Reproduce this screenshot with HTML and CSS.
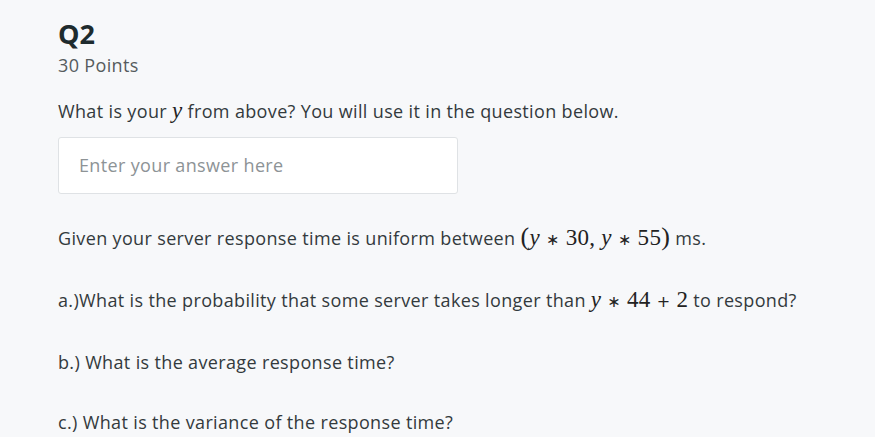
FILE: index.html
```html
<!DOCTYPE html>
<html>
<head>
<meta charset="utf-8">
<link rel="stylesheet" href="styles.css">
</head>
<body>
<main class="question">
  <h1 class="q-title">Q2</h1>
  <div class="q-points">30 Points</div>
  <p class="q-text first">What is your <span class="math"><i>y</i></span> from above? You will use it in the question below.</p>
  <div class="answer">Enter your answer here</div>
  <p class="q-text">Given your server response time is uniform between <span class="math"><span class="paren">(</span><i>y</i><span class="op">∗</span>30,<span class="sp"></span><i>y</i><span class="op">∗</span>55<span class="paren">)</span></span> ms.</p>
  <p class="q-text">a.)What is the probability that some server takes longer than <span class="math"><i>y</i><span class="op">∗</span>44<span class="op">+</span>2</span> to respond?</p>
  <p class="q-text">b.) What is the average response time?</p>
  <p class="q-text">c.) What is the variance of the response time?</p>
</main>
</body>
</html>
```
FILE: styles.css
```css
html, body {
  margin: 0;
  padding: 0;
  background: #f7f8fa;
}
body {
  font-family: "Open Sans", sans-serif;
  color: #333a3d;
}
.question {
  padding: 17px 58px 0;
}
.q-title {
  margin: 0;
  font-size: 27px;
  line-height: 34px;
  font-weight: 700;
  color: #1e2b2e;
}
.q-points {
  font-size: 18px;
  line-height: 24px;
  letter-spacing: 0.35px;
  color: #555b5e;
  margin-top: 2px;
}
.q-text {
  margin: 0;
  font-size: 18px;
  line-height: 24px;
  letter-spacing: 0.35px;
  margin-top: 36px;
}
.q-text.first {
  margin-top: 22px;
}
.answer {
  box-sizing: border-box;
  width: 400px;
  height: 57px;
  margin-top: 14px;
  margin-bottom: -5px;
  background: #fff;
  border: 1px solid #dfe2e5;
  border-radius: 3px;
  padding: 15px 20px;
  font-size: 18px;
  line-height: 24px;
  letter-spacing: 0.35px;
  color: #8d9396;
}
.math {
  font-family: "Liberation Serif", "DejaVu Serif", serif;
  font-size: 23px;
  letter-spacing: 0.3px;
  color: #222;
}
.math i {
  font-style: italic;
}
.math .op {
  margin: 0 6px;
  font-family: "DejaVu Sans", sans-serif;
  font-size: 16px;
}
.math .paren {
  font-size: 26px;
}
.math .sp {
  display: inline-block;
  width: 6px;
}
```
